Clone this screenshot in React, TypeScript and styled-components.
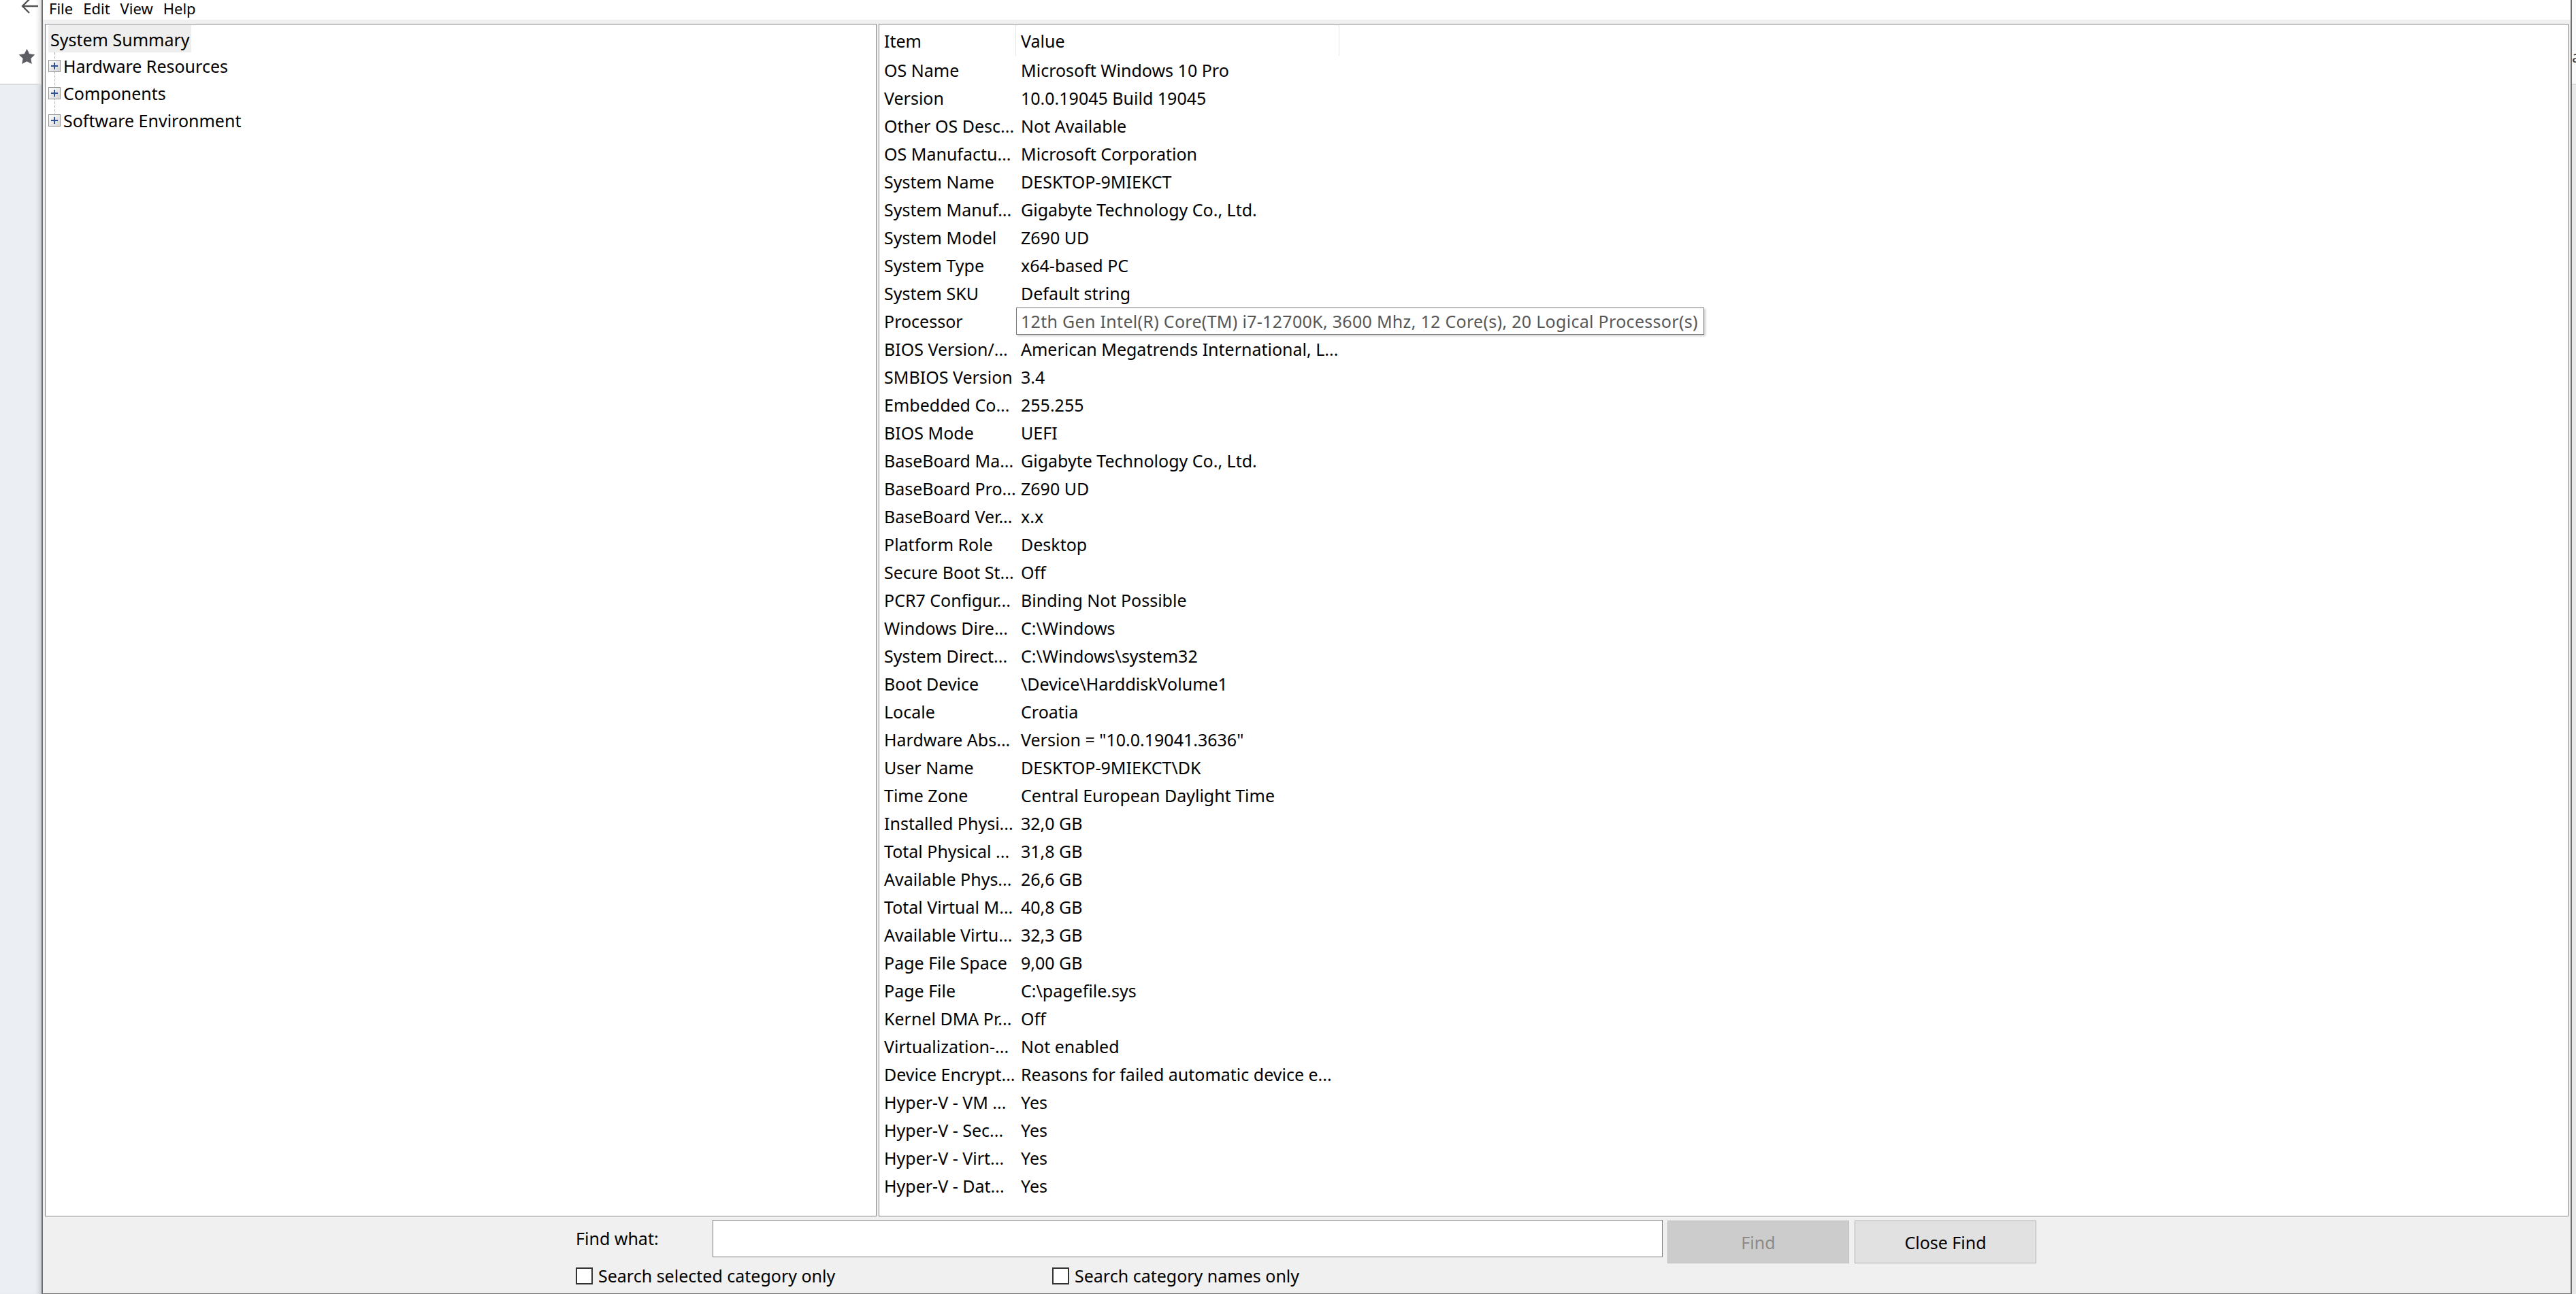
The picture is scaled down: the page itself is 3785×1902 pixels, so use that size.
import React from 'react';
import styled, { createGlobalStyle } from 'styled-components';

interface SummaryRow {
  item: string;
  value: string;
  tooltip?: boolean;
}

const rows: SummaryRow[] = [
  { item: 'OS Name', value: 'Microsoft Windows 10 Pro' },
  { item: 'Version', value: '10.0.19045 Build 19045' },
  { item: 'Other OS Desc...', value: 'Not Available' },
  { item: 'OS Manufactu...', value: 'Microsoft Corporation' },
  { item: 'System Name', value: 'DESKTOP-9MIEKCT' },
  { item: 'System Manuf...', value: 'Gigabyte Technology Co., Ltd.' },
  { item: 'System Model', value: 'Z690 UD' },
  { item: 'System Type', value: 'x64-based PC' },
  { item: 'System SKU', value: 'Default string' },
  {
    item: 'Processor',
    value: '12th Gen Intel(R) Core(TM) i7-12700K, 3600 Mhz, 12 Core(s), 20 Logical Processor(s)',
    tooltip: true
  },
  { item: 'BIOS Version/...', value: 'American Megatrends International, L...' },
  { item: 'SMBIOS Version', value: '3.4' },
  { item: 'Embedded Co...', value: '255.255' },
  { item: 'BIOS Mode', value: 'UEFI' },
  { item: 'BaseBoard Ma...', value: 'Gigabyte Technology Co., Ltd.' },
  { item: 'BaseBoard Pro...', value: 'Z690 UD' },
  { item: 'BaseBoard Ver...', value: 'x.x' },
  { item: 'Platform Role', value: 'Desktop' },
  { item: 'Secure Boot St...', value: 'Off' },
  { item: 'PCR7 Configur...', value: 'Binding Not Possible' },
  { item: 'Windows Dire...', value: 'C:\\Windows' },
  { item: 'System Direct...', value: 'C:\\Windows\\system32' },
  { item: 'Boot Device', value: '\\Device\\HarddiskVolume1' },
  { item: 'Locale', value: 'Croatia' },
  { item: 'Hardware Abs...', value: 'Version = "10.0.19041.3636"' },
  { item: 'User Name', value: 'DESKTOP-9MIEKCT\\DK' },
  { item: 'Time Zone', value: 'Central European Daylight Time' },
  { item: 'Installed Physi...', value: '32,0 GB' },
  { item: 'Total Physical ...', value: '31,8 GB' },
  { item: 'Available Phys...', value: '26,6 GB' },
  { item: 'Total Virtual M...', value: '40,8 GB' },
  { item: 'Available Virtu...', value: '32,3 GB' },
  { item: 'Page File Space', value: '9,00 GB' },
  { item: 'Page File', value: 'C:\\pagefile.sys' },
  { item: 'Kernel DMA Pr...', value: 'Off' },
  { item: 'Virtualization-...', value: 'Not enabled' },
  { item: 'Device Encrypt...', value: 'Reasons for failed automatic device e...' },
  { item: 'Hyper-V - VM ...', value: 'Yes' },
  { item: 'Hyper-V - Sec...', value: 'Yes' },
  { item: 'Hyper-V - Virt...', value: 'Yes' },
  { item: 'Hyper-V - Dat...', value: 'Yes' }
];

const treeChildren = ['Hardware Resources', 'Components', 'Software Environment'];

function PlusBox() {
  return (
    <svg width="18" height="18" viewBox="0 0 18 18">
      <defs>
        <linearGradient id="plusFill" x1="0" y1="0" x2="1" y2="1">
          <stop offset="0" stopColor="#ffffff" />
          <stop offset="1" stopColor="#d4d4d4" />
        </linearGradient>
      </defs>
      <rect x="0.5" y="0.5" width="17" height="17" fill="url(#plusFill)" stroke="#929292" />
      <path d="M4 9h10M9 4v10" stroke="#2f4f96" strokeWidth="2" />
    </svg>
  );
}

function App() {
  return (
    <Screen>
      <GlobalStyle />
      <Sidebar>
        <SidebarTop>
          <BackIcon width="26" height="24" viewBox="0 0 26 24">
            <path d="M2 11H25M12 1L2 11l10 10" fill="none" stroke="#545454" strokeWidth="2.4" />
          </BackIcon>
          <StarIcon width="27" height="27" viewBox="0 0 24 24">
            <path
              d="M12 1.5l3.2 6.6 7.3 1-5.3 5.1 1.3 7.2L12 18l-6.5 3.4 1.3-7.2-5.3-5.1 7.3-1z"
              fill="#5c5e63"
            />
          </StarIcon>
        </SidebarTop>
        <SidebarRest />
      </Sidebar>

      <Window>
        <MenuBar>
          <MenuItem>File</MenuItem>
          <MenuItem>Edit</MenuItem>
          <MenuItem>View</MenuItem>
          <MenuItem>Help</MenuItem>
        </MenuBar>

        <Panes>
          <TreePane>
            <TreeRoot>System Summary</TreeRoot>
            <TreeChildren>
              {treeChildren.map((name) => (
                <TreeRow key={name}>
                  <PlusBox />
                  <span>{name}</span>
                </TreeRow>
              ))}
            </TreeChildren>
          </TreePane>

          <ListPane>
            <ListHeader>
              <HeaderCell width={201}>Item</HeaderCell>
              <HeaderCell width={475}>Value</HeaderCell>
            </ListHeader>
            {rows.map((row) => (
              <ListRow key={row.item}>
                <ItemCell>{row.item}</ItemCell>
                <ValueCell>
                  {row.tooltip ? <Tooltip>{row.value}</Tooltip> : row.value}
                </ValueCell>
              </ListRow>
            ))}
          </ListPane>
        </Panes>

        <FindPanel>
          <FindRow>
            <FindLabel>Find what:</FindLabel>
            <FindInput />
            <FindButton disabled>Find</FindButton>
            <FindButton>Close Find</FindButton>
          </FindRow>
          <OptionRow>
            <CheckOption width={700}>
              <CheckBox />
              Search selected category only
            </CheckOption>
            <CheckOption>
              <CheckBox />
              Search category names only
            </CheckOption>
          </OptionRow>
        </FindPanel>
      </Window>

      <EdgeStrip>
        <EdgeTop>a</EdgeTop>
        <EdgeRest />
      </EdgeStrip>
    </Screen>
  );
}

const GlobalStyle = createGlobalStyle`
  html, body {
    margin: 0;
    padding: 0;
    overflow: hidden;
  }
  body {
    font-family: "Noto Sans", "Liberation Sans", sans-serif;
    color: #000;
    background: #fff;
  }
  * {
    box-sizing: border-box;
  }
`;

const Screen = styled.div`
  display: flex;
  width: 3785px;
  height: 1902px;
  font-size: 25px;
`;

const Sidebar = styled.div`
  width: 63px;
  display: flex;
  flex-direction: column;
  border-right: 2px solid #6f6f6f;
`;

const SidebarTop = styled.div`
  height: 125px;
  display: flex;
  flex-direction: column;
  background: #fff;
  border-bottom: 2px solid #dcdcdc;
  box-shadow: inset -9px 0 8px -7px rgba(0, 0, 0, 0.18);
`;

const BackIcon = styled.svg`
  margin: -2px 0 0 31px;
`;

const StarIcon = styled.svg`
  margin: 48px 0 0 26px;
`;

const SidebarRest = styled.div`
  flex: 1;
  background: #ebeef3;
  box-shadow: inset -9px 0 8px -7px rgba(0, 0, 0, 0.2);
`;

const Window = styled.div`
  width: 3716px;
  display: flex;
  flex-direction: column;
  background: #f0f0f0;
  border-right: 2px solid #6e6e6e;
`;

const MenuBar = styled.div`
  height: 29px;
  display: flex;
  gap: 15px;
  padding-left: 9px;
  background: #fff;
  font-size: 22px;
  line-height: 25px;
`;

const MenuItem = styled.span`
  cursor: default;
`;

const Panes = styled.div`
  display: flex;
  gap: 3px;
  height: 1753px;
  margin-top: 6px;
  padding: 0 3px;
`;

const TreePane = styled.div`
  width: 1222px;
  padding: 1px 4px;
  background: #fff;
  border: 1px solid #85878c;
`;

const TreeRoot = styled.div`
  display: inline-block;
  height: 40px;
  padding: 0 3px;
  line-height: 42px;
  background: #eeeeee;
`;

const TreeChildren = styled.div`
  position: relative;
  &::before {
    content: '';
    position: absolute;
    left: 9px;
    top: 0;
    bottom: 28px;
    border-left: 1px dotted #9a9a9a;
  }
`;

const TreeRow = styled.div`
  position: relative;
  display: flex;
  align-items: center;
  gap: 4px;
  height: 40px;
  line-height: 42px;
`;

const ListPane = styled.div`
  flex: 1;
  background: #fff;
  border: 1px solid #85878c;
`;

const ListHeader = styled.div`
  display: flex;
  height: 47px;
  padding-top: 1px;
`;

const HeaderCell = styled.div<{ width: number }>`
  width: ${(props) => props.width}px;
  height: 45px;
  padding: 1px 0 0 7px;
  line-height: 44px;
  white-space: nowrap;
  border-right: 1px solid #e5e5e5;
`;

const ListRow = styled.div`
  display: flex;
  height: 41px;
  line-height: 41px;
  white-space: nowrap;
`;

const ItemCell = styled.div`
  width: 201px;
  padding-left: 7px;
  overflow: hidden;
`;

const ValueCell = styled.div`
  position: relative;
  width: 475px;
  padding-left: 7px;
`;

const Tooltip = styled.div`
  position: absolute;
  left: 0;
  top: 0;
  height: 40px;
  padding: 0 8px 0 6px;
  line-height: 38px;
  letter-spacing: 0.3px;
  color: #575757;
  background: #fff;
  border: 1px solid #777;
  box-shadow: 2px 2px 3px rgba(0, 0, 0, 0.2);
`;

const FindPanel = styled.div`
  flex: 1;
  padding: 5px 0 0 783px;
  border-bottom: 1px solid #6e6e6e;
`;

const FindRow = styled.div`
  display: flex;
  align-items: flex-start;
  height: 64px;
`;

const FindLabel = styled.div`
  width: 201px;
  line-height: 55px;
`;

const FindInput = styled.div`
  width: 1396px;
  height: 55px;
  background: #fff;
  border: 1px solid #7a7a7a;
`;

const FindButton = styled.button`
  width: 267px;
  height: 63px;
  margin: 1px 0 0 8px;
  padding: 0;
  font-family: inherit;
  font-size: 25px;
  color: ${(props) => (props.disabled ? '#8a8a8a' : '#000')};
  background: ${(props) => (props.disabled ? '#cccccc' : '#e1e1e1')};
  border: 1px solid ${(props) => (props.disabled ? '#bfbfbf' : '#adadad')};
  &:first-of-type {
    margin-left: 7px;
  }
`;

const OptionRow = styled.div`
  display: flex;
  margin-top: 6px;
`;

const CheckOption = styled.label<{ width?: number }>`
  display: flex;
  align-items: center;
  gap: 8px;
  height: 25px;
  ${(props) => props.width && `width: ${props.width}px;`}
  line-height: 25px;
`;

const CheckBox = styled.span`
  width: 25px;
  height: 25px;
  background: #fff;
  border: 2px solid #333;
`;

const EdgeStrip = styled.div`
  flex: 1;
  display: flex;
  flex-direction: column;
  overflow: hidden;
`;

const EdgeTop = styled.div`
  height: 125px;
  padding-top: 66px;
  font-size: 24px;
  color: #444;
  background: #fafafa;
  border-bottom: 2px solid #dcdcdc;
`;

const EdgeRest = styled.div`
  flex: 1;
  background: #e9e9e9;
`;

export default App;
